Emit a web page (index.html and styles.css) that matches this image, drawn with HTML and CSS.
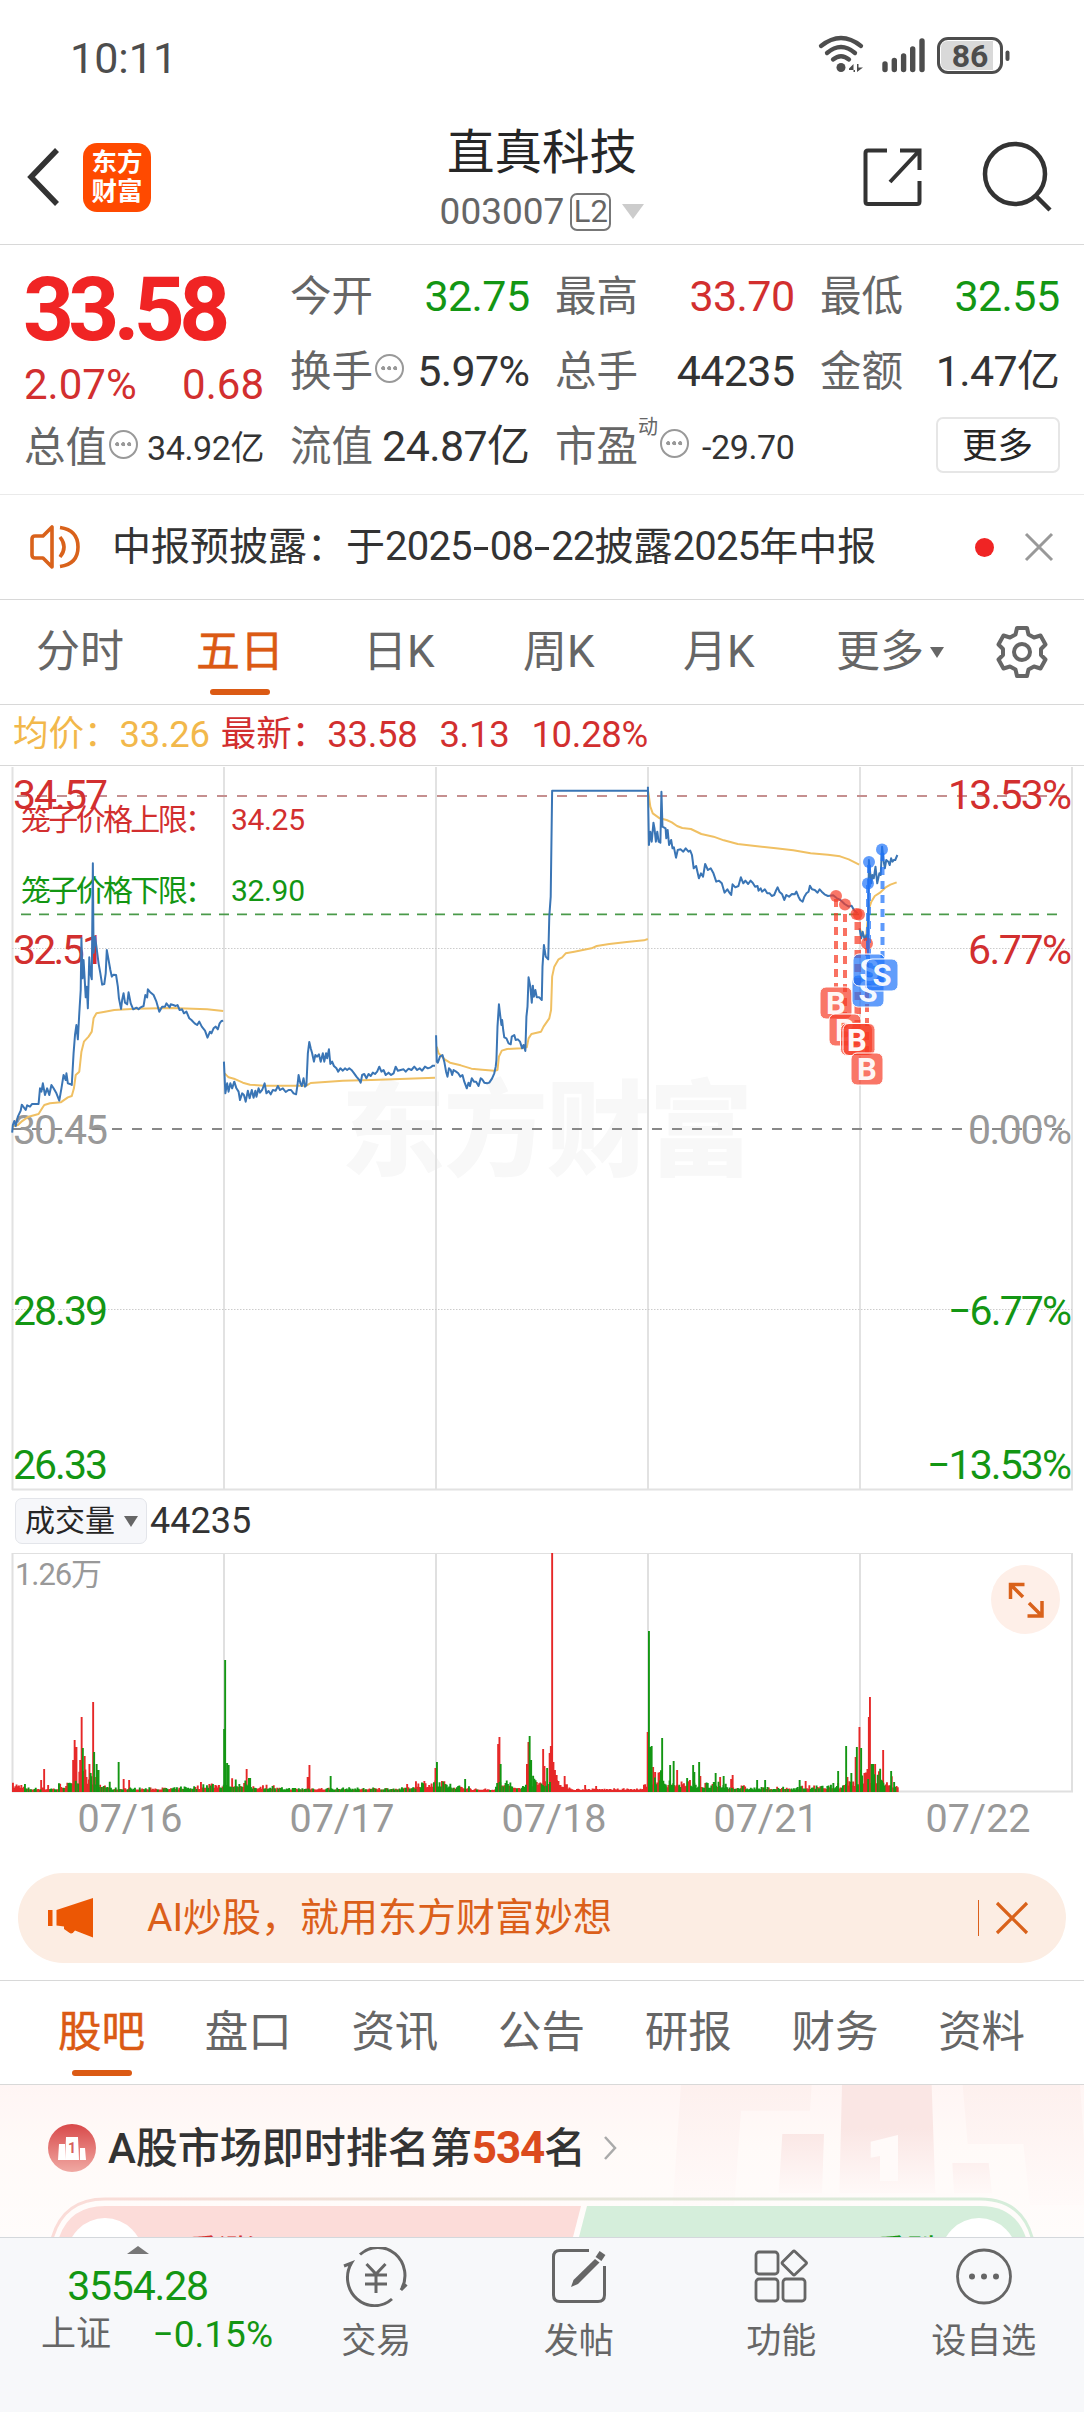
FILE: index.html
```html
<!DOCTYPE html>
<html lang="zh-CN">
<head>
<meta charset="utf-8">
<title>直真科技 003007</title>
<link rel="stylesheet" href="styles.css">
</head>
<body>
<div class="status">
  <span class="clock">10:11</span>
  <svg class="status-icons" width="220" height="60" viewBox="0 0 220 60" fill="none" stroke="#4d4d4d">
    <g stroke-width="4.3" stroke-linecap="round">
      <path d="M11 19Q31 3 51 19"/><path d="M17 26Q31 14 45 26"/><path d="M23 32.500Q31 26 39 32.500"/>
    </g>
    <circle cx="31" cy="40.500" r="4.500" fill="#4d4d4d" stroke="none"/>
    <path d="M39 41.500L43.500 37V45H45V43H39ZM47 37V45L53 40.500H48.500V37Z" fill="#4d4d4d" stroke="none"/>
    <path d="M75 37V42.500M84.300 33.500V42.500M93.600 29V42.500M102.700 22V42.500M112 14V42.500" stroke-width="5.400" stroke-linecap="round"/>
    <rect x="128.500" y="11.500" width="63" height="34" rx="9.500" stroke-width="3"/>
    <path d="M138 14H183V43H138Q131 43 131 36V21Q131 14 138 14Z" fill="#d9d9d9" stroke="none"/>
    <path d="M197.500 25.500V32" stroke-width="4" stroke-linecap="round"/>
    <text class="battery" x="160" y="40" text-anchor="middle">86</text>
  </svg>
</div>

<header class="header">
  <div class="header-left">
    <svg width="34" height="60" viewBox="0 0 34 60" fill="none" stroke="#333" stroke-width="5.500"><path d="M30 3L4 30L30 57"/></svg>
    <div class="logo"><span>东方</span><span>财富</span></div>
  </div>
  <div class="title">
    <h1>直真科技</h1>
    <div class="code"><span>003007</span><b>L2</b><i class="tri tri-code"></i></div>
  </div>
  <div class="header-right">
    <svg width="62" height="62" viewBox="0 0 62 62" fill="none" stroke="#333" stroke-width="4"><path d="M25 4.500H6Q3.500 4.500 3.500 7V55.500Q3.500 58 6 58H55Q57.500 58 57.500 55.500V35M38 4.500H57.500V24M57 5L28 36"/></svg>
    <svg width="72" height="72" viewBox="0 0 72 72" fill="none" stroke="#333" stroke-width="4.500"><circle cx="34" cy="34" r="30"/><path d="M55 56L69 70"/></svg>
  </div>
</header>

<section class="quote">
  <div class="price-col">
    <strong>33.58</strong>
    <div class="change"><span>2.07%</span><span>0.68</span></div>
    <div class="cell"><label>总值</label><i class="info"></i><span class="small">34.92亿</span></div>
  </div>
  <div class="stats">
    <div class="cell"><label>今开</label><span class="green">32.75</span></div>
    <div class="cell"><label>最高</label><span class="red">33.70</span></div>
    <div class="cell"><label>最低</label><span class="green">32.55</span></div>
    <div class="cell"><label>换手</label><i class="info"></i><span>5.97%</span></div>
    <div class="cell"><label>总手</label><span>44235</span></div>
    <div class="cell"><label>金额</label><span>1.47亿</span></div>
    <div class="cell"><label>流值</label><span>24.87亿</span></div>
    <div class="cell"><label>市盈</label><sup>动</sup><i class="info"></i><span class="small">-29.70</span></div>
    <div class="cell"><button class="more">更多</button></div>
  </div>
</section>

<section class="notice">
  <svg width="52" height="46" viewBox="0 0 52 46" fill="none" stroke="#d9621b" stroke-width="3.600"><path d="M23 3V43L14 34H6Q3 34 3 31V15Q3 12 6 12H14Z" stroke-linejoin="round"/><path d="M31 13Q39 23 31 33M31 3.500Q49 6 49 23T31 42.500"/></svg>
  <p>中报预披露：于<span>2025</span><s></s><span>08</span><s></s><span>22</span>披露<span>2025</span>年中报</p>
  <i class="dot"></i>
  <svg width="30" height="30" viewBox="0 0 30 30" stroke="#999" stroke-width="3"><path d="M2 2L28 28M28 2L2 28"/></svg>
</section>

<nav class="periods">
  <a>分时</a><a class="on">五日</a><a>日K</a><a>周K</a><a>月K</a>
  <a class="p-more">更多<i class="tri tri-dark"></i></a>
  <svg width="54" height="54" viewBox="0 0 54 54" fill="none" stroke="#666" stroke-width="4" stroke-linejoin="round"><path d="M22 3H32L33.500 9.500L39 12.500L45.500 10.500L50.500 19.500L46 24V30L50.500 34.500L45.500 43.500L39 41.500L33.500 44.500L32 51H22L20.500 44.500L15 41.500L8.500 43.500L3.500 34.500L8 30V24L3.500 19.500L8.500 10.500L15 12.500L20.500 9.500Z"/><circle cx="27" cy="27" r="8"/></svg>
</nav>

<div class="legend">
  <span class="avg">均价：<em>33.26</em></span>
  <span class="last">最新：<em>33.58</em><em>3.13</em><em>10.28%</em></span>
</div>

<svg class="chart" width="1084" height="726" viewBox="0 766 1084 726">
  <text class="watermark" x="341" y="1168" textLength="412">东方财富</text>
  <path d="M12.500 767V1490M224 767V1490M436 767V1490M648 767V1490M860 767V1490M1072 767V1490M12 1489.500H1073" stroke="#e2e2e2" stroke-width="2"/>
  <path d="M12 948.500H1072M12 1309.500H1072" stroke="#ccc" stroke-dasharray="1.500 1.500"/>
  <path d="M17 796H1072" stroke="#c58f8f" stroke-width="2.200" stroke-dasharray="10 10"/>
  <path d="M21 914.300H1057" stroke="#4a9a4a" stroke-width="1.700" stroke-dasharray="10 8"/>
  <path d="M12 1129H1072" stroke="#888" stroke-width="2" stroke-dasharray="10 10"/>
  <g class="axis">
    <g class="red"><text x="13" y="809" textLength="95">34.57</text><text x="13" y="964" textLength="92">32.51</text><text x="1072" y="809" text-anchor="end" textLength="124">13.53%</text><text x="1072" y="964" text-anchor="end" textLength="104">6.77%</text></g>
    <g class="gray"><text x="13" y="1144" textLength="95">30.45</text><text x="1072" y="1144" text-anchor="end" textLength="104">0.00%</text></g>
    <g class="green"><text x="13" y="1325" textLength="95">28.39</text><text x="13" y="1479" textLength="95">26.33</text><text x="1072" y="1325" text-anchor="end" textLength="124">−6.77%</text><text x="1072" y="1479" text-anchor="end" textLength="145">−13.53%</text></g>
  </g>
  <g class="cage">
    <text class="red" x="21" y="830" textLength="194">笼子价格上限：</text><text class="red" x="231" y="830" textLength="74">34.25</text>
    <text class="green" x="21" y="901" textLength="194">笼子价格下限：</text><text class="green" x="231" y="901" textLength="74">32.90</text>
  </g>
  <g class="lines" transform="translate(0 760) scale(.35714 .33333)">
    <polyline class="y" points="34,1100 50,1095 60,1085 80,1070 108,1062 118,1045 124,1035 140,1030 170,1027 190,1012 201,1008 207,985 212,945 222,935 228,875 235,845 248,830 257,815 262,775 270,760 290,756 320,750 380,746 480,744 540,746 580,748 625,753"/>
    <polyline class="y" points="629,940 640,952 655,956 680,968 700,974 740,977 800,977 858,977 870,969 910,966 960,962 1040,960 1120,957 1218,953"/>
    <polyline class="y" points="1223,860 1228,880 1245,898 1260,908 1290,916 1320,926 1350,929 1385,932 1393,930 1397,890 1405,872 1420,867 1460,865 1475,862 1480,835 1488,822 1515,815 1522,800 1538,775 1543,750 1546,650 1552,620 1564,598 1574,592 1584,580 1608,575 1656,565 1671,558 1706,552 1755,546 1803,541 1814,537"/>
    <polyline class="b" points="34,1118 36,1095 40,1083 44,1098 50,1070 58,1052 61,1034 72,1050 76,1036 84,1040 90,1032 108,1032 112,985 116,995 120,970 126,1005 132,985 138,1005 144,975 150,985 158,1000 166,1022 172,985 178,945 184,960 186,940 190,970 196,972 201,975 206,880 210,825 214,795 218,838 222,760 226,690 228,535 231,655 234,600 237,655 240,712 243,680 246,745 250,592 253,640 257,658 260,310 262,578 266,530 270,560 276,610 281,640 286,674 292,672 296,640 299,570 304,600 309,630 313,650 318,644 325,645 330,680 333,715 339,747 342,720 346,700 350,728 356,733 360,697 366,730 373,748 382,743 388,748 394,742 402,738 407,705 412,712 414,688 420,696 430,705 438,725 446,755 454,740 462,740 466,730 475,742 478,733 485,735 492,738 497,735 503,750 510,748 515,760 522,755 530,775 536,780 545,790 552,795 558,785 565,800 574,812 581,833 588,815 592,820 598,805 604,800 610,808 615,790 620,783 625,782"/>
    <polyline class="b" points="627,905 631,1000 636,970 640,995 645,970 650,985 656,965 662,985 668,995 672,1020 678,1000 683,1005 688,1025 694,992 699,1015 705,990 710,1013 715,992 718,1010 724,985 728,998 734,990 741,970 746,1000 752,993 758,1003 764,990 772,992 778,978 784,990 792,985 800,996 808,990 815,990 822,1000 829,1003 833,975 836,945 841,970 845,978 850,955 854,980 858,975 862,880 866,846 870,865 874,880 879,905 883,885 888,890 893,883 898,905 904,880 908,905 913,880 916,895 921,868 925,912 930,905 935,918 942,925 947,935 953,925 960,932 966,925 972,930 978,925 984,930 990,938 998,950 1006,960 1010,968 1014,945 1020,942 1026,955 1032,942 1038,948 1044,938 1050,942 1056,935 1062,920 1068,935 1074,930 1080,945 1088,938 1095,945 1102,940 1108,920 1114,932 1122,930 1130,928 1136,935 1144,926 1152,930 1160,920 1168,930 1175,925 1182,932 1190,920 1198,925 1206,922 1212,917 1218,917"/>
    <polyline class="b" points="1221,826 1223,905 1226,908 1232,890 1239,885 1244,905 1249,935 1253,950 1257,925 1262,930 1266,945 1270,930 1277,935 1283,940 1289,950 1295,945 1300,965 1307,985 1312,968 1316,978 1321,955 1327,965 1333,965 1340,978 1346,955 1350,958 1356,968 1364,970 1370,968 1378,955 1384,940 1388,920 1390,900 1393,800 1397,733 1401,770 1404,795 1406,780 1409,810 1412,832 1418,835 1424,850 1430,853 1433,830 1440,825 1444,840 1450,838 1456,845 1462,865 1466,855 1471,873 1474,770 1477,740 1480,652 1485,680 1489,728 1492,677 1495,710 1499,690 1503,712 1510,712 1517,720 1519,620 1523,555 1528,590 1535,598 1538,470 1542,410 1546,92 1814,92"/>
  </g>
  <g class="lines" transform="translate(540 760) scale(.34694 .33333)">
    <polyline class="y" points="312,95 318,140 325,160 345,175 365,180 380,187 395,198 410,204 435,207 465,222 500,230 530,241 570,252 620,258 680,265 730,271 780,280 830,284 865,289 890,298 920,314"/>
    <polyline class="y" points="921,505 930,525 940,530 947,450 955,425 965,408 980,398 995,383 1010,374 1028,367"/>
    <polyline class="b" points="311,80 314,255 318,215 322,245 327,188 330,205 334,245 338,215 342,245 347,248 350,95 353,200 362,205 364,235 368,210 372,255 378,240 382,265 386,262 392,293 397,270 405,268 413,275 420,265 428,275 433,272 438,285 443,325 450,318 458,355 464,340 470,350 476,312 484,330 492,325 500,340 508,365 516,362 524,370 532,398 540,388 546,398 551,405 555,373 563,382 572,378 579,352 586,370 592,362 600,372 607,362 613,368 620,380 627,378 630,392 636,385 640,395 648,388 655,400 662,400 668,408 675,405 681,390 685,382 690,395 698,403 704,420 710,405 718,410 726,402 734,403 739,395 745,410 750,420 757,425 762,410 768,400 774,395 778,377 784,388 792,390 800,398 806,388 812,395 820,403 830,408 845,406 856,415 866,420 878,432 890,440 898,437 905,450 915,460"/>
    <polyline class="b" points="921,505 926,535 930,515 936,540 941,525 945,575 948,300 955,370 958,345 962,355 967,320 972,370 978,340 982,345 986,260 990,300 994,325 998,300 1004,305 1008,315 1012,295 1016,305 1020,300 1024,300 1030,285"/>
  </g>
  <g class="buy">
    <path d="M836 899V987M845 914V1013M856.500 922V1022M859 922V1022M867 948V1053"/>
    <circle cx="836" cy="896" r="6"/><circle cx="845" cy="904.500" r="6"/><circle cx="856.500" cy="914" r="6"/><circle cx="859" cy="914.500" r="6"/><circle cx="867" cy="943.500" r="6"/>
  </g>
  <g class="sell">
    <path d="M869 865V954M868 885V976M882.500 853V958"/>
    <circle cx="869" cy="862" r="6"/><circle cx="868" cy="883.500" r="6"/><circle cx="882" cy="849.500" r="6"/>
  </g>
  <g class="badge buy"><g transform="translate(820 987)"><rect width="32" height="32" rx="6"/><text x="16" y="27">B</text></g><g transform="translate(829 1014)"><rect width="32" height="32" rx="6"/><text x="16" y="27">B</text></g><g transform="translate(840.500 1023.500)"><rect width="32" height="32" rx="6"/><text x="16" y="27">B</text></g><g transform="translate(843 1023.500)"><rect width="32" height="32" rx="6"/><text x="14" y="27">B</text></g><g transform="translate(851 1053)"><rect width="32" height="32" rx="6"/><text x="16" y="27">B</text></g></g>
  <g class="badge sell"><g transform="translate(852 975)"><rect width="32" height="32" rx="6"/><text x="16" y="27">S</text></g><g transform="translate(853 954)"><rect width="32" height="32" rx="6"/><text x="16" y="27">S</text></g><g transform="translate(866 959)"><rect width="32" height="32" rx="6"/><text x="16" y="27">S</text></g></g>
</svg>

<div class="vol-head"><span class="pill">成交量<i class="tri tri-dark"></i></span><em>44235</em></div>

<div class="volume">
  <svg id="volume" width="1084" height="242" viewBox="0 1552 1084 242">
    <path d="M12.500 1553V1792M224 1553V1792M436 1553V1792M648 1553V1792M860 1553V1792M1072 1553V1792M12 1791.500H1073" stroke="#e0e0e0" stroke-width="2"/>
    <path d="M12 1553.500H1073" stroke="#e0e0e0"/>
    <text class="vmax" x="15" y="1585" textLength="87">1.26万</text>
    <path id="vol-up" fill="#e62828"/>
    <path id="vol-down" fill="#139613"/>
  </svg>
  <div class="expand"><svg width="36" height="36" viewBox="0 0 36 36" fill="none" stroke="#d9621b" stroke-width="3.500"><path d="M2.500 17V2.500H16.500M3 3L15 15M34 19V34H19.500M33 33L21 21"/></svg></div>
</div>
<div class="dates"><span>07/16</span><span>07/17</span><span>07/18</span><span>07/21</span><span>07/22</span></div>

<div class="banner">
  <svg width="46" height="40" viewBox="0 0 46 40" fill="#ec5704"><path d="M0 12H4.500V28H0ZM8.500 12L45 0V39.500L27 32.500Q24 37 21 34.500L16 31V28.500L8.500 27.500Z"/></svg>
  <p>AI炒股，就用东方财富妙想</p>
  <i></i>
  <svg width="34" height="34" viewBox="0 0 34 34" stroke="#d9621b" stroke-width="3.200"><path d="M2 2L32 32M32 2L2 32"/></svg>
</div>

<nav class="tabs"><a class="on">股吧</a><a>盘口</a><a>资讯</a><a>公告</a><a>研报</a><a>财务</a><a>资料</a></nav>

<section class="feed">
  <svg class="podium" width="444" height="125" viewBox="0 15 1332 375">
    <defs><linearGradient id="g1" x2="0" y2="1"><stop offset="0" stop-color="#fdf0ee"/><stop offset="1" stop-color="#fffaf9"/></linearGradient><linearGradient id="g2" x2="0" y2="1"><stop offset=".4" stop-color="#fae6e4"/><stop offset="1" stop-color="#fff9f8"/></linearGradient></defs>
    <path d="M123 15H515L510 92H303L283 375H98ZM968 15H1320L1345 375H1170L1150 192H983Z" fill="url(#g1)"/>
    <path d="M606 15H875L886 340H598ZM427 162H552L546 340H416ZM937 249H1046L1056 340H942Z" fill="url(#g2)"/>
    <path d="M692 185L774 165V303H720V228L692 233Z" fill="#fffaf9"/>
  </svg>
  <div class="rank">
    <svg width="48" height="48" viewBox="0 0 48 48"><defs><linearGradient id="g3" x2="0" y2="1"><stop stop-color="#d8494a"/><stop offset="1" stop-color="#f0a9a3"/></linearGradient></defs><circle cx="24" cy="24" r="24" fill="url(#g3)"/><path d="M11 20H17V36H10ZM18 13H30L31 36H17ZM32 24H37L38 36H32Z" fill="#fff"/><text class="one" x="24" y="29">1</text></svg>
    <p>A股市场即时排名第<strong>534</strong>名</p>
    <svg width="16" height="26" viewBox="0 0 16 26" fill="none" stroke="#aaa" stroke-width="2.500"><path d="M2 2L12 13L2 24"/></svg>
  </div>
  <svg class="vote" width="984" height="40" viewBox="51 2196 984 40">
    <defs><linearGradient id="g4"><stop stop-color="#fbdcd8"/><stop offset="1" stop-color="#d5edda"/></linearGradient></defs>
    <path d="M51.500 2240Q62 2198 105 2198H980Q1023 2198 1033 2240" fill="none" stroke="url(#g4)" stroke-width="3"/>
    <path d="M58 2240Q68 2205 105 2205H581L572 2240Z" fill="#fcdcd9"/>
    <path d="M587 2205H980Q1017 2205 1027 2240H578Z" fill="#d5eedb"/>
    <circle cx="105" cy="2255" r="38" fill="#fff"/><circle cx="979" cy="2255" r="38" fill="#fff"/>
    <text class="red" x="181" y="2266" font-size="37">看涨</text><text class="green" x="869" y="2266" font-size="37">看跌</text>
  </svg>
</section>

<footer class="bottom">
  <div class="index"><i class="tri-up"></i><strong>3554.28</strong><div><span>上证</span><em>−0.15%</em></div></div>
  <div class="item"><svg width="66" height="60" viewBox="0 0 66 60" fill="none" stroke="#666" stroke-width="3"><path d="M17 7.500A27 28 0 0 1 58 43L63.500 37.500M49 52A27 28 0 0 1 8.500 16L1 19M23.500 17L33 27L42.500 17M22 28H44M22 37H44M33 27V46"/></svg><span>交易</span></div>
  <div class="item"><svg width="56" height="60" viewBox="0 0 56 60" fill="none" stroke="#666" stroke-width="3"><path d="M38 3.500H9Q2.500 3.500 2.500 10V48Q2.500 54.500 9 54.500H47Q53.500 54.500 53.500 48V19"/><path d="M47.500 12L51.500 6" stroke-width="7"/><path d="M44 12L48.500 15.500L27 37L20 40L22.500 33Z" fill="#666" stroke="none"/></svg><span>发帖</span></div>
  <div class="item"><svg width="56" height="60" viewBox="0 0 56 60" fill="none" stroke="#666" stroke-width="2.800"><rect x="3" y="5" width="22" height="22" rx="3"/><rect x="3" y="32" width="22" height="22" rx="3"/><rect x="30" y="32" width="22" height="22" rx="3"/><path d="M40 4.500Q41 3.500 42 4.500L53 15Q54 16 53 17L42 27.500Q41 28.500 40 27.500L29.500 17Q28.500 16 29.500 15Z"/></svg><span>功能</span></div>
  <div class="item"><svg width="58" height="60" viewBox="0 0 58 60" fill="none" stroke="#666" stroke-width="2.800"><circle cx="29" cy="29.500" r="26.500"/><g fill="#666" stroke="none"><circle cx="17" cy="29.500" r="3"/><circle cx="29" cy="29.500" r="3"/><circle cx="41" cy="29.500" r="3"/></g></svg><span>设自选</span></div>
</footer>
<script src="script.js"></script>
</body>
</html>
```
FILE: styles.css
```css
* { box-sizing: border-box; }
body { margin: 0; width: 1084px; height: 2412px; overflow: hidden; background: #fff; color: #333; font-family: Roboto, "Noto Sans CJK SC", sans-serif; font-size: 43.500px; line-height: 1; }
h1, p { margin: 0; font-weight: 400; }
em, i { font-style: normal; }
svg { display: block; flex: none; }
.red { color: #d22f2f; fill: #d22f2f; }
.green { color: #139613; fill: #139613; }
.gray { fill: #999; }
.tri { display: inline-block; border: solid transparent; border-bottom: 0; }
.tri-dark { border-width: 11px 7.500px 0; border-top-color: #666; }
.tri-code { border-width: 15px 11.500px 0; border-top-color: #ccc; margin-left: 11px; }

.status { height: 115px; display: flex; justify-content: space-between; padding: 27px 54px 0 70px; color: #4d4d4d; }
.clock { font-size: 43px; line-height: 62px; }
.battery { font: 700 32px Roboto; fill: #4d4d4d; stroke: none; }

.header { height: 130px; display: flex; justify-content: space-between; border-bottom: 1px solid #d8d8d8; padding: 0 31px 0 27px; }
.header-left { width: 302px; display: flex; gap: 22px; padding: 28px 0 0; }
.header-left svg { margin-top: 4px; }
.logo { width: 68px; height: 69px; border-radius: 14px; background: #ff4a00; color: #fff; display: flex; flex-direction: column; align-items: center; padding-top: 5px; font-size: 25.500px; font-weight: 700; }
.logo span { line-height: 29px; }
.title { display: flex; flex-direction: column; align-items: center; }
.title h1 { font-size: 47.500px; line-height: 48px; margin-top: 14px; color: #262626; }
.code { display: flex; align-items: center; height: 39px; margin-top: 15px; font-size: 37px; color: #666; }
.code b { font-weight: 400; font-size: 31px; line-height: 34px; border: 2px solid #777; border-radius: 7px; width: 41px; height: 38px; text-align: center; margin-left: 6px; }
.header-right { width: 298px; display: flex; justify-content: flex-end; gap: 57px; padding-top: 31px; }
.header-right svg:last-child { margin-top: -6px; }

.quote { height: 250px; display: flex; gap: 26px; padding: 14px 24px 0; border-bottom: 1px solid #eaeaea; }
.price-col { width: 240px; color: #d22f2f; }
.price-col strong { display: block; font-size: 89px; line-height: 101px; letter-spacing: -5.700px; color: #f02424; margin-left: -1px; }
.change { display: flex; justify-content: space-between; height: 50px; line-height: 50px; font-size: 42px; }
.stats { flex: 1; display: grid; grid-template-columns: repeat(3, 239.500px); column-gap: 25.500px; grid-auto-rows: 75px; }
.cell { display: flex; align-items: center; height: 75px; white-space: nowrap; }
.cell label { font-size: 41.500px; color: #666; }
.cell span { margin-left: auto; color: #333; font-size: 43px; letter-spacing: -.6px; }
.cell span.red { color: #d22f2f; }
.cell span.green { color: #139613; }
.cell .small { font-size: 34px; letter-spacing: -.4px; }
.cell sup { font-size: 20px; color: #666; align-self: flex-start; margin-top: 8px; line-height: 20px; }
.info { width: 29px; height: 29px; border: 2.500px solid #999; border-radius: 50%; margin: -7px 0 0 2px; background: radial-gradient(circle, #999 1.800px, transparent 2.300px) center / 6.500px 6.500px no-repeat, radial-gradient(circle, #999 1.800px, transparent 2.300px) 2.500px center / 6.500px 6.500px no-repeat, radial-gradient(circle, #999 1.800px, transparent 2.300px) 15px center / 6.500px 6.500px no-repeat; }
.more { margin-left: auto; width: 124px; height: 56px; border: 2px solid #e6e6e6; border-radius: 7px; background: #fff; font: 35.500px/1 "Noto Sans CJK SC"; color: #262626; padding: 0 0 4px; margin-top: -3px; }

.notice { height: 105px; display: flex; align-items: center; padding: 0 30px 0 29px; border-bottom: 1px solid #d8d8d8; }
.notice p { font-size: 39px; margin-left: 31px; flex: 1; white-space: nowrap; display: flex; align-items: center; }
.notice p span { font-size: 40px; letter-spacing: -.8px; }
.notice s { width: 14px; height: 3px; background: #333; margin: 3px 2px 0; }
.dot { width: 19px; height: 19px; border-radius: 50%; background: #f02424; margin-right: 30px; }

.periods { height: 105px; position: relative; display: flex; align-items: center; padding: 0 35px 0 36px; border-bottom: 1px solid #d8d8d8; color: #666; }
.periods a { width: 160px; position: relative; line-height: 104px; font-size: 44px; }
.tabs a { color: #666; }
.periods a:nth-child(3), .periods a:nth-child(4), .periods a:nth-child(5) { padding-left: 7px; }
.periods .p-more { flex: 1; display: flex; align-items: center; }
.p-more .tri { margin-left: 6px; }
.periods .on, .tabs .on { color: #db5a14; -webkit-text-stroke: .5px #db5a14; }
.on::after { content: ""; position: absolute; left: 14px; bottom: 9px; width: 60px; height: 6px; border-radius: 3px; background: #db5a14; }

.legend { height: 61px; border-bottom: 1px solid #d8d8d8; display: flex; gap: 11px; align-items: center; padding-left: 13px; font-size: 35.500px; color: #d22f2f; }
.legend span { display: flex; align-items: center; }
.legend em { font-size: 36.500px; letter-spacing: -.3px; margin-right: 22px; }
.legend .avg { color: #f2b84b; }
.legend .avg em { margin-right: 0; }

.axis { font-size: 41px; }
.cage text { font-size: 30px; }
.watermark { font: 900 104px "Noto Sans CJK SC"; fill: #f8f8f8; }
.lines polyline { fill: none; stroke-width: 2; vector-effect: non-scaling-stroke; stroke-linejoin: round; }
.lines .b { stroke: #3a75b5; }
.lines .y { stroke: #f0c063; }
.buy { fill: rgba(246, 60, 38, .7); }
.sell { fill: rgba(30, 115, 250, .7); }
.buy path, .sell path { stroke: rgba(246, 60, 38, .72); stroke-width: 4; stroke-dasharray: 8 6; }
.sell path { stroke: rgba(30, 115, 250, .72); }
.badge rect { stroke: #fff; stroke-width: 1; }
.badge text { font: 700 31px Roboto; fill: #fff; fill-opacity: .95; text-anchor: middle; }

.vol-head { height: 60px; display: flex; align-items: center; padding: 0 0 2px 15px; gap: 3px; font-size: 36px; }
.pill { width: 132px; height: 46px; border: 1.500px solid #e3e5ea; border-radius: 7px; background: #f6f7fa; display: flex; align-items: center; padding-left: 9px; font-size: 30px; color: #262626; }
.pill .tri { margin-left: 9px; }
.volume { height: 242px; position: relative; }
.vmax { font-size: 31px; fill: #999; }
.expand { position: absolute; right: 24px; top: 13px; width: 69px; height: 69px; border-radius: 50%; background: #feefe8; display: flex; align-items: center; justify-content: center; }
.dates { display: grid; grid-template-columns: repeat(5, 212px); padding-left: 24px; text-align: center; height: 79px; line-height: 50px; font-size: 39.500px; color: #999; }

.banner { margin: 0 18px 17px; height: 90px; border-radius: 45px; background: #fcede3; color: #db5f1a; display: flex; align-items: center; padding: 0 37px 0 30px; }
.banner p { flex: 1; margin-left: 53px; font-size: 39px; }
.banner i { width: 1px; height: 36px; background: #db5f1a; margin-right: 16px; }

.tabs { height: 105px; border: solid #d8d8d8; border-width: 1px 0; display: grid; grid-template-columns: repeat(7, 88px); column-gap: 58.700px; padding-left: 58px; line-height: 104px; }
.tabs a { position: relative; white-space: nowrap; }

.feed { height: 152px; position: relative; overflow: hidden; background: linear-gradient(#fff5f4, #fffaf8 40%, #fffcfb); }
.podium { position: absolute; left: 640px; top: 0; }
.rank { position: relative; height: 112px; display: flex; align-items: center; padding: 14px 0 0 48px; font-size: 42px; }
.rank p { margin: 0 17px 0 12px; font-weight: 500; white-space: nowrap; }
.rank strong { color: #dc4b1e; font-size: 44px; letter-spacing: -1.200px; font-weight: 700; }
.one { font: 700 14px Roboto; fill: #d8605c; text-anchor: middle; }
.vote { position: relative; margin-left: 51px; }

.bottom { height: 176px; border-top: 1px solid #d4d8dc; background: #f7f8fa; display: grid; grid-template-columns: 275px repeat(4, 202.500px); color: #666; font-size: 35px; }
.index { display: flex; flex-direction: column; align-items: center; color: #139613; padding-top: 8px; }
.tri-up { border: solid transparent; border-width: 0 11px 8px; border-bottom-color: #777; }
.index strong { font-weight: 400; font-size: 41px; line-height: 50px; margin-top: 7px; letter-spacing: -1.200px; }
.index div { display: flex; align-self: stretch; justify-content: space-between; padding: 0 2px 0 41px; line-height: 48px; }
.index span { color: #666; }
.index em { font-size: 37px; }
.item { display: flex; flex-direction: column; align-items: center; padding-top: 9px; }
.item span { line-height: 48px; margin-top: 11px; }
```
FILE: script.js
```js
// Minute volume: [x, height, direction]; quiet minutes are filled from a per-range level.
const BASE = 1792;
const peaks = [
  [44, 23, 1], [41, 12, 1], [48, 7, 1], [73, 32, 1], [74.5, 52, 1], [76.3, 45, 1], [80, 32, 1], [81.5, 75, 1], [82.7, 44, 0], [84.5, 36, 1],
  [89.3, 28, 1], [90.5, 19, 0], [93, 90, 1], [94, 40, 0], [96.5, 28, 0], [118.5, 30, 0], [123.5, 13, 1], [129, 12, 1],
  [224, 63, 0], [225, 132, 0], [227, 29, 0], [228.5, 27, 0], [246.5, 23, 1], [309.3, 27, 1], [307.5, 15, 1], [330.5, 16, 0],
  [435.3, 24, 1], [436.8, 30, 0], [465, 13, 0], [498, 48, 1], [499.3, 55, 1], [500.5, 28, 0], [526.8, 28, 1], [528.3, 50, 1], [529.5, 56, 0],
  [531, 32, 0], [543, 43, 1], [544.3, 26, 1], [547, 24, 0], [549.5, 39, 1], [550.7, 46, 1], [552, 239, 1], [553.3, 30, 1], [554.8, 22, 1],
  [556.5, 17, 1], [558.3, 11, 1], [560, 7, 1], [564.5, 16, 1], [585, 7, 1], [596, 6, 1],
  [647.5, 60, 1], [648.8, 161, 0], [650, 45, 0], [651.5, 46, 0], [653, 25, 1], [655, 20, 1], [660, 20, 1], [662, 54, 0], [670, 27, 0],
  [673.5, 31, 0], [677, 22, 1], [687, 14, 0], [693, 27, 0], [694.2, 20, 0], [699, 30, 0], [700.2, 16, 1], [715.5, 19, 0], [720, 15, 1],
  [723.5, 16, 0], [731, 13, 1], [732.5, 17, 1], [757, 12, 0], [765, 12, 0], [799.5, 12, 0], [805.5, 11, 1], [838, 21, 0], [846, 46, 0],
  [847.3, 15, 1], [851.2, 19, 0], [855.5, 35, 1], [856.7, 45, 0], [859.3, 65, 1], [861, 44, 0], [864.3, 19, 1], [867.3, 23, 1],
  [868.7, 75, 1], [869.8, 95, 1], [871.5, 28, 0], [873, 28, 0], [875, 28, 1], [883, 42, 1], [891, 21, 0]
];
// [from, to, level, share of rising minutes]
const ranges = [
  [12, 24, 8, .9], [24, 58, 3, .7], [58, 70, 8, .7], [70, 98, 20, .7], [98, 110, 8, .5], [110, 180, 3, .6], [180, 200, 5, .4], [200, 224, 9, .7],
  [224, 250, 12, .45], [250, 275, 6, .5], [275, 405, 3, .5], [405, 415, 6, .5], [415, 435, 11, .7], [435, 450, 9, .4], [450, 470, 5, .4],
  [470, 495, 2, .8], [495, 510, 12, .4], [510, 525, 5, .4], [525, 550, 14, .6], [550, 560, 16, 1], [560, 570, 6, 1], [570, 643, 2, 1],
  [643, 648, 7, 1], [648, 665, 19, .5], [665, 690, 11, .55], [690, 725, 8, .4], [725, 745, 5, .5], [745, 800, 3.5, .3], [800, 830, 5, .45],
  [830, 845, 7, .4], [845, 860, 14, .6], [860, 880, 21, .5], [880, 892, 16, .5], [892, 897, 9, .5]
];
let seed = 7;
const rnd = () => (seed = (seed * 16807) % 2147483647) / 2147483647;
const bar = (x, h) => `M${x} ${BASE}v${-h}h1.9v${h}z`;
const out = ['', ''];
for (const [from, to, level, rising] of ranges) {
  for (let x = from; x < to; x += 1.2) {
    out[rnd() < rising ? 0 : 1] += bar(x.toFixed(1), (1.5 + level * (.3 + .8 * rnd() ** 2)).toFixed(1));
  }
}
for (const [x, h, up] of peaks) out[up ? 0 : 1] += bar(x - .8, h);
document.getElementById('vol-up').setAttribute('d', out[0]);
document.getElementById('vol-down').setAttribute('d', out[1]);
```
